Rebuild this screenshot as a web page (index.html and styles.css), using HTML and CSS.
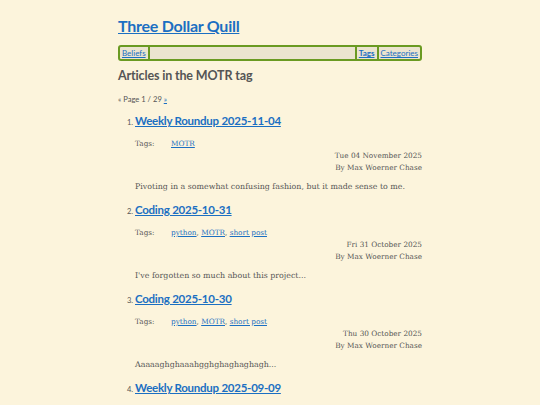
FILE: index.html
```html
<!DOCTYPE html>
<html lang="en">
<head>
<meta charset="utf-8">
<title>Three Dollar Quill</title>
<link rel="stylesheet" href="styles.css">
</head>
<body>
<div class="page">
  <h1 class="site-title"><a href="#">Three Dollar Quill</a></h1>
  <nav class="menu">
    <a class="menu-item first" href="#">Beliefs</a>
    <span class="spacer"></span>
    <a class="menu-item current" href="#">Tags</a>
    <a class="menu-item" href="#">Categories</a>
  </nav>
  <h2 class="section-title">Articles in the MOTR tag</h2>
  <p class="pager">« Page 1 / 29 <a href="#">»</a></p>
  <ol class="articles">
    <li class="article">
      <h3 class="article-title"><a href="#">Weekly Roundup 2025-11-04</a></h3>
      <div class="tags"><span class="tags-label">Tags:</span><span class="tags-list"><a href="#">MOTR</a></span></div>
      <div class="meta">Tue 04 November 2025</div>
      <div class="meta">By Max Woerner Chase</div>
      <p class="summary">Pivoting in a somewhat confusing fashion, but it made sense to me.</p>
    </li>
    <li class="article">
      <h3 class="article-title"><a href="#">Coding 2025-10-31</a></h3>
      <div class="tags"><span class="tags-label">Tags:</span><span class="tags-list"><a href="#">python</a>, <a href="#">MOTR</a>, <a href="#">short post</a></span></div>
      <div class="meta">Fri 31 October 2025</div>
      <div class="meta">By Max Woerner Chase</div>
      <p class="summary">I've forgotten so much about this project...</p>
    </li>
    <li class="article">
      <h3 class="article-title"><a href="#">Coding 2025-10-30</a></h3>
      <div class="tags"><span class="tags-label">Tags:</span><span class="tags-list"><a href="#">python</a>, <a href="#">MOTR</a>, <a href="#">short post</a></span></div>
      <div class="meta">Thu 30 October 2025</div>
      <div class="meta">By Max Woerner Chase</div>
      <p class="summary">Aaaaaghghaaahgghghaghaghagh...</p>
    </li>
    <li class="article">
      <h3 class="article-title"><a href="#">Weekly Roundup 2025-09-09</a></h3>
      <div class="tags"><span class="tags-label">Tags:</span><span class="tags-list"><a href="#">MOTR</a></span></div>
      <div class="meta">Tue 09 September 2025</div>
      <div class="meta">By Max Woerner Chase</div>
    </li>
  </ol>
</div>
</body>
</html>
```
FILE: styles.css
```css
html, body {
  margin: 0;
  padding: 0;
  background: #fcf4dc;
}
body {
  font-family: "DejaVu Serif", serif;
  color: #555;
  font-size: 7.9px;
}
a {
  color: #1b6fc2;
}
.page {
  width: 304px;
  margin: 0 auto;
  padding-top: 15px;
}
.site-title {
  margin: 0;
  font-family: Lato, sans-serif;
  font-size: 16px;
  letter-spacing: -0.25px;
  line-height: 22px;
  font-weight: 700;
}
.menu {
  margin-top: 8px;
  display: flex;
  align-items: stretch;
  height: 12px;
  border: 2px solid #6a9a22;
  border-radius: 3px;
  background: #ebe4cf;
  font-family: Lato, sans-serif;
  font-size: 8px;
  line-height: 12px;
}
.menu-item {
  padding: 0 2px;
}
.menu-item.first {
  border-right: 2px solid #6a9a22;
}
.spacer {
  flex: 1;
}
.menu-item.current {
  font-weight: 700;
  border-left: 2px solid #6a9a22;
  border-right: 2px solid #6a9a22;
}
.section-title {
  margin: 7px 0 0;
  font-family: Lato, sans-serif;
  font-size: 12.5px;
  letter-spacing: -0.15px;
  line-height: 16px;
  font-weight: 700;
  color: #555;
}
.pager {
  margin: 9px 0 0;
  line-height: 12px;
  font-family: Lato, sans-serif;
  font-size: 7.6px;
}
.articles {
  margin: 8px 0 0;
  padding-left: 17px;
}
.article {
  line-height: 12px;
  margin-bottom: 9px;
}
.article::marker {
  font-family: Lato, sans-serif;
  font-size: 7.5px;
}
.article-title {
  margin: 0;
  font-family: Lato, sans-serif;
  font-size: 11.5px;
  letter-spacing: -0.25px;
  line-height: 16px;
  font-weight: 700;
}
.tags {
  margin-top: 9px;
  display: flex;
  font-size: 7.3px;
}
.tags-label {
  width: 36px;
}
.meta {
  text-align: right;
  font-size: 7.3px;
}
.summary {
  margin: 7px 0 0;
}
```
